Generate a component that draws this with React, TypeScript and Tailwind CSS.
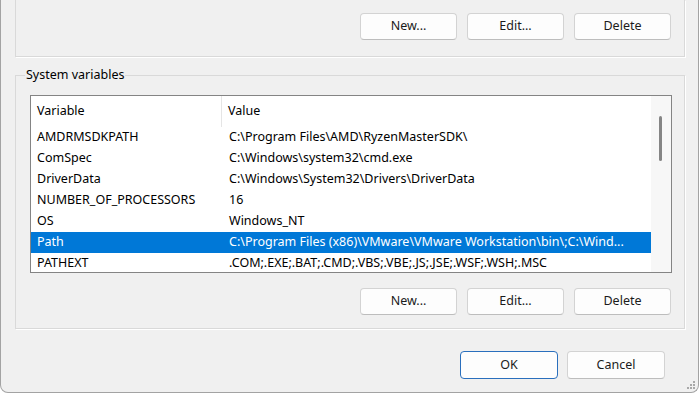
import React from "react";

const font = { fontFamily: '"Noto Sans", "Open Sans", Arial, sans-serif' };

const rows: [string, string][] = [
  ["AMDRMSDKPATH", "C:\\Program Files\\AMD\\RyzenMasterSDK\\"],
  ["ComSpec", "C:\\Windows\\system32\\cmd.exe"],
  ["DriverData", "C:\\Windows\\System32\\Drivers\\DriverData"],
  ["NUMBER_OF_PROCESSORS", "16"],
  ["OS", "Windows_NT"],
  ["Path", "C:\\Program Files (x86)\\VMware\\VMware Workstation\\bin\\;C:\\Wind..."],
  ["PATHEXT", ".COM;.EXE;.BAT;.CMD;.VBS;.VBE;.JS;.JSE;.WSF;.WSH;.MSC"],
];

function Btn({ label, primary }: { label: string; primary?: boolean }) {
  return (
    <button
      type="button"
      className={
        "flex h-[27px] w-[97px] items-center justify-center rounded-[4px] border bg-[#fdfdfd] text-[12.5px] text-[#1b1b1b] " +
        (primary ? "border-[#2a6fbd]" : "border-[#d3d3d3] border-b-[#bdbdbd]")
      }
    >
      {label}
    </button>
  );
}

export default function App() {
  return (
    <div className="h-[395px] w-[700px] overflow-hidden bg-white" style={font}>
      {/* window */}
      <div className="relative flex h-[393px] w-[699px] flex-col rounded-b-[8px] border-x border-b border-[#a3a3a3] bg-[#f0f0f0] pl-[14px] pr-[13px]">
        {/* User variables (cut off at top) */}
        <div className="flex h-[57px] items-start justify-end gap-[10px] border-x border-b border-[#d9d9d9] pr-[13px] pt-[13px] shadow-[1px_1px_0_#ffffff]">
          <Btn label="New..." />
          <Btn label="Edit..." />
          <Btn label="Delete" />
        </div>

        {/* System variables */}
        <div className="relative mt-[18px] flex h-[254px] flex-col border border-[#d9d9d9] pb-[13px] pl-[14px] pr-[12px] pt-[19px] shadow-[1px_1px_0_#ffffff]">
          <span className="absolute left-[9px] top-[-10px] bg-[#f0f0f0] px-px text-[12.5px] leading-[18px] text-black">
            System variables
          </span>

          {/* list view */}
          <div className="flex h-[178px] overflow-hidden border border-[#848484] bg-white text-[12.5px] text-black">
            <div className="flex flex-1 flex-col">
              <div className="flex h-[31px] shrink-0 items-center">
                <div className="flex h-full w-[191px] items-center border-r border-[#e5e5e5] pl-[6px]">Variable</div>
                <div className="pl-[6px]">Value</div>
              </div>
              {rows.map(([name, value]) => {
                const sel = name === "Path";
                return (
                  <div
                    key={name}
                    className={
                      "flex h-[21px] shrink-0 items-center whitespace-nowrap " +
                      (sel ? "bg-[#0078d7] text-white" : "")
                    }
                  >
                    <div className="w-[192px] pl-[6px]">{name}</div>
                    <div className="pl-[6px]">{value}</div>
                  </div>
                );
              })}
            </div>
            {/* scrollbar */}
            <div className="flex w-[20px] shrink-0 bg-[#f7f7f7] pl-[8px] pt-[20px]">
              <div className="h-[45px] w-[3px] rounded-full bg-[#858585]" />
            </div>
          </div>

          <div className="mt-[15px] flex justify-end gap-[10px] pr-px">
            <Btn label="New..." />
            <Btn label="Edit..." />
            <Btn label="Delete" />
          </div>
        </div>

        {/* OK / Cancel */}
        <div className="mr-[20px] mt-[22px] flex justify-end gap-[9px]">
          <button
            type="button"
            className="flex h-[28px] w-[98px] items-center justify-center rounded-[4px] border border-[#2a6fbd] bg-[#fdfdfd] text-[12.5px] text-[#1b1b1b]"
          >
            OK
          </button>
          <button
            type="button"
            className="flex h-[28px] w-[98px] items-center justify-center rounded-[4px] border border-[#d3d3d3] border-b-[#bdbdbd] bg-[#fdfdfd] text-[12.5px] text-[#1b1b1b]"
          >
            Cancel
          </button>
        </div>

        {/* resize grip */}
        <svg className="absolute bottom-[2px] right-[2px]" width="10" height="10" viewBox="0 0 10 10">
          <g fill="#a8a8a8">
            <rect x="7" y="1" width="2" height="2" />
            <rect x="4" y="4" width="2" height="2" />
            <rect x="7" y="4" width="2" height="2" />
            <rect x="1" y="7" width="2" height="2" />
            <rect x="4" y="7" width="2" height="2" />
            <rect x="7" y="7" width="2" height="2" />
          </g>
        </svg>
      </div>
    </div>
  );
}
